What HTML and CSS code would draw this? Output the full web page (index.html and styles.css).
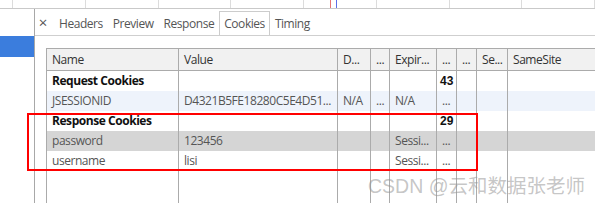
FILE: index.html
```html
<!DOCTYPE html>
<html>
<head>
<meta charset="utf-8">
<link rel="stylesheet" href="styles.css">
</head>
<body>
<div class="page">
  <div class="strip">
    <span></span><span></span><span></span><span></span><span></span><span></span><span></span><span></span><span></span>
    <i class="mark red"></i><i class="mark blue"></i>
  </div>
  <div class="main">
    <aside class="sidebar"><div class="sel"></div></aside>
    <section class="panel">
      <nav class="tabs">
        <span class="close">×</span>
        <span class="tab">Headers</span>
        <span class="tab">Preview</span>
        <span class="tab">Response</span>
        <span class="tab active">Cookies</span>
        <span class="tab">Timing</span>
      </nav>
      <div class="wrap">
        <table class="grid">
          <colgroup>
            <col class="c-name"><col class="c-value"><col class="c-d"><col class="c-dot1"><col class="c-exp"><col class="c-dot2"><col class="c-dot3"><col class="c-se"><col class="c-same">
          </colgroup>
          <thead>
            <tr><th>Name</th><th>Value</th><th>D...</th><th>...</th><th>Expir...</th><th>...</th><th>...</th><th>Se...</th><th>SameSite</th></tr>
          </thead>
          <tbody>
            <tr class="group"><td>Request Cookies</td><td></td><td></td><td></td><td></td><td class="num">43</td><td></td><td></td><td></td></tr>
            <tr class="alt"><td>JSESSIONID</td><td>D4321B5FE18280C5E4D51...</td><td>N/A</td><td>...</td><td>N/A</td><td>...</td><td></td><td></td><td></td></tr>
            <tr class="group"><td>Response Cookies</td><td></td><td></td><td></td><td></td><td class="num">29</td><td></td><td></td><td></td></tr>
            <tr class="selrow"><td>password</td><td>123456</td><td></td><td></td><td>Sessi...</td><td>...</td><td></td><td></td><td></td></tr>
            <tr><td>username</td><td>lisi</td><td></td><td></td><td>Sessi...</td><td>...</td><td></td><td></td><td></td></tr>
            <tr class="filler"><td></td><td></td><td></td><td></td><td></td><td></td><td></td><td></td><td></td></tr>
          </tbody>
        </table>
      </div>
    </section>
  </div>
  <div class="highlight"></div>
  <div class="watermark">CSDN @云和数据张老师</div>
</div>
</body>
</html>
```
FILE: styles.css
```css
* { box-sizing: border-box; }
html, body { margin: 0; padding: 0; background: #fff; }
body { width: 595px; height: 203px; overflow: hidden; font-family: "Open Sans", "Noto Sans", sans-serif; font-size: 12px; letter-spacing: -0.45px; }
.page { position: relative; width: 595px; height: 203px; overflow: hidden; }

.strip { position: relative; height: 9px; border-bottom: 1px solid #c9c9c9; display: grid; grid-template-columns: repeat(9, 72.75px); padding-left: 12px; }
.strip span { border-left: 1px solid #dcdcdc; }
.mark { position: absolute; top: 0; width: 1px; height: 8px; }
.mark.red { left: 330px; background: #e57373; }
.mark.blue { left: 336px; background: #5b6ee8; }

.main { display: flex; height: 194px; }
.sidebar { width: 35px; border-right: 1px solid #a8a8a8; padding-top: 27px; }
.sel { height: 21px; background: #3b7ddd; }

.panel { flex: 1; display: flex; flex-direction: column; min-width: 0; }
.tabs { height: 27px; border-bottom: 1px solid #cfcfcf; display: flex; align-items: flex-end; padding-left: 0; color: #555; }
.close { width: 16px; height: 25px; line-height: 24px; text-align: center; font-size: 15px; color: #555; margin-right: 3px; letter-spacing: 0; }
.tab { height: 24px; line-height: 23px; padding: 0 4px; border: 1px solid transparent; border-bottom: none; color: #555; }
.tab.active { border-color: #cccccc; background: #fff; }

.wrap { flex: 1; padding: 12px 0 0 11px; overflow: hidden; }
.grid { border-collapse: collapse; table-layout: fixed; width: 582px; }
.c-name { width: 132px; }
.c-value { width: 159px; }
.c-d { width: 33px; }
.c-dot1 { width: 19px; }
.c-exp { width: 47px; }
.c-dot2 { width: 20px; }
.c-dot3 { width: 20px; }
.c-se { width: 31px; }
.c-same { width: 121px; }

.grid th, .grid td { border-left: 1px solid #ababab; border-right: 1px solid #ababab; padding: 0 0 0 5px; white-space: nowrap; overflow: hidden; text-align: left; font-weight: normal; }
.grid th { height: 22px; background: #f1f1f1; color: #333; border-top: 1px solid #ababab; border-bottom: 1px solid #ababab; }
.grid td { height: 20px; color: #555; }
.grid tr.group td:first-child { font-weight: bold; color: #111; }
.grid td.num { font-family: "Liberation Sans", Arial, sans-serif; font-weight: bold; color: #111; font-size: 12px; padding-left: 3px; letter-spacing: 0; }
.grid tr.alt td { background: #eef3fb; }
.grid tr.selrow td { background: #d5d5d5; }
.grid tr.filler td { height: 40px; }

.highlight { position: absolute; left: 27px; top: 113px; width: 451px; height: 58px; border: 2px solid #f00; }
.watermark { position: absolute; left: 368px; top: 170px; font-family: "Liberation Sans", "Noto Sans CJK SC", sans-serif; font-size: 19.5px; letter-spacing: 0; color: rgba(150,150,150,0.55); white-space: nowrap; }
```
